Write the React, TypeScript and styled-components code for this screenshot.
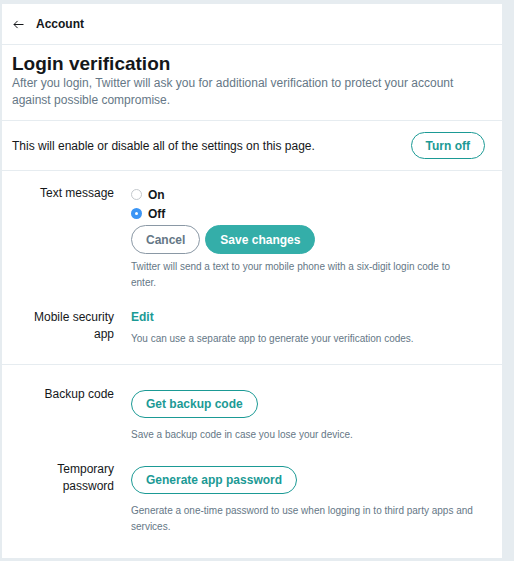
import React, { useState } from 'react'
import styled, { createGlobalStyle } from 'styled-components'

const teal = '#1b9a95'
const tealFill = '#34aea9'
const ink = '#14171a'
const gray = '#657786'
const line = '#e6ecf0'

const Global = createGlobalStyle`
  body {
    margin: 0;
    background: ${line};
    font-family: "Liberation Sans", Arial, Helvetica, sans-serif;
    color: ${ink};
  }
`

const S = {
  Page: styled.div`
    padding: 4px 12px 4px 2px;
  `,
  Panel: styled.div`
    background: #fff;
    width: 500px;
    padding-bottom: 23px;
  `,
  Header: styled.div`
    display: flex;
    align-items: center;
    gap: 12px;
    height: 40px;
    padding-left: 11px;
    border-bottom: 1px solid ${line};
    font-size: 12px;
    font-weight: 700;
  `,
  Back: styled.button`
    display: flex;
    align-items: center;
    padding: 0;
    border: none;
    background: none;
    cursor: pointer;
  `,
  Intro: styled.div`
    padding: 8px 10px 11px;
    border-bottom: 1px solid ${line};
  `,
  Title: styled.h1`
    margin: 0;
    font-size: 19px;
    line-height: 22px;
    font-weight: 700;
  `,
  Lead: styled.p`
    margin: 0;
    font-size: 12px;
    line-height: 17px;
    color: ${gray};
  `,
  Toggle: styled.div`
    display: flex;
    align-items: center;
    justify-content: space-between;
    padding: 11px 17px 11px 10px;
    border-bottom: 1px solid ${line};
    font-size: 12px;
  `,
  Section: styled.div<{ $top: number; $bottom: number; $divider?: boolean }>`
    display: grid;
    grid-template-columns: 112px 1fr;
    column-gap: 17px;
    row-gap: 18px;
    padding: ${p => p.$top}px 27px ${p => p.$bottom}px 0;
    border-bottom: ${p => (p.$divider ? `1px solid ${line}` : 'none')};
  `,
  Label: styled.div`
    text-align: right;
    font-size: 12px;
    line-height: 17px;
  `,
  Field: styled.div`
    display: flex;
    flex-direction: column;
    align-items: flex-start;
  `,
  Radio: styled.label`
    display: flex;
    align-items: center;
    gap: 6px;
    height: 19px;
    font-size: 12px;
    font-weight: 700;
    cursor: pointer;
  `,
  Dot: styled.span<{ $on: boolean }>`
    box-sizing: border-box;
    width: 11px;
    height: 11px;
    border-radius: 50%;
    border: ${p => (p.$on ? 'none' : '1px solid #c4c9cd')};
    background: ${p => (p.$on ? '#3b95f5' : '#fff')};
    display: flex;
    align-items: center;
    justify-content: center;
    &::after {
      content: '';
      width: 3px;
      height: 3px;
      border-radius: 50%;
      background: ${p => (p.$on ? '#fff' : 'transparent')};
    }
  `,
  Actions: styled.div`
    display: flex;
    gap: 5px;
    margin-top: 2px;
  `,
  Button: styled.button<{ $variant: 'outline' | 'fill' | 'muted' }>`
    box-sizing: border-box;
    height: ${p => (p.$variant === 'outline' ? 28 : 29)}px;
    padding: 0 14px;
    border-radius: 100px;
    font-family: inherit;
    font-size: 12px;
    font-weight: 700;
    cursor: pointer;
    border: 1px solid
      ${p => (p.$variant === 'fill' ? tealFill : p.$variant === 'muted' ? '#8a98a5' : teal)};
    background: ${p => (p.$variant === 'fill' ? tealFill : '#fff')};
    color: ${p => (p.$variant === 'fill' ? '#fff' : p.$variant === 'muted' ? gray : teal)};
  `,
  Holder: styled.div<{ $top: number }>`
    padding: ${p => p.$top}px 0 4px;
  `,
  Link: styled.a`
    font-size: 12px;
    line-height: 17px;
    font-weight: 700;
    color: ${teal};
    text-decoration: none;
    cursor: pointer;
  `,
  Help: styled.p`
    margin: 5px 0 0;
    font-size: 10px;
    line-height: 16px;
    color: ${gray};
  `
}

const BackArrow = () => (
  <svg width='11' height='9' viewBox='0 0 11 9' fill='none' stroke={ink} strokeWidth='1'>
    <path d='M10.5 4.5H1M4.6 0.9L1 4.5l3.6 3.6' />
  </svg>
)

export default function App() {
  const [sms, setSms] = useState<'on' | 'off'>('off')

  return (
    <>
      <Global />
      <S.Page>
        <S.Panel>
          <S.Header>
            <S.Back type='button' aria-label='Back'>
              <BackArrow />
            </S.Back>
            Account
          </S.Header>

          <S.Intro>
            <S.Title>Login verification</S.Title>
            <S.Lead>
              After you login, Twitter will ask you for additional verification to protect your account
              against possible compromise.
            </S.Lead>
          </S.Intro>

          <S.Toggle>
            This will enable or disable all of the settings on this page.
            <S.Button $variant='outline' type='button' style={{ height: 27 }}>
              Turn off
            </S.Button>
          </S.Toggle>

          <S.Section $top={14} $bottom={17} $divider>
            <S.Label>Text message</S.Label>
            <S.Field>
              <S.Radio onClick={() => setSms('on')}>
                <S.Dot $on={sms === 'on'} />
                On
              </S.Radio>
              <S.Radio onClick={() => setSms('off')}>
                <S.Dot $on={sms === 'off'} />
                Off
              </S.Radio>
              <S.Actions>
                <S.Button $variant='muted' type='button'>Cancel</S.Button>
                <S.Button $variant='fill' type='button'>Save changes</S.Button>
              </S.Actions>
              <S.Help>Twitter will send a text to your mobile phone with a six-digit login code to enter.</S.Help>
            </S.Field>

            <S.Label>
              Mobile security
              <br />
              app
            </S.Label>
            <S.Field>
              <S.Link>Edit</S.Link>
              <S.Help>You can use a separate app to generate your verification codes.</S.Help>
            </S.Field>
          </S.Section>

          <S.Section $top={21} $bottom={0}>
            <S.Label>Backup code</S.Label>
            <S.Field>
              <S.Holder $top={4}>
                <S.Button $variant='outline' type='button'>Get backup code</S.Button>
              </S.Holder>
              <S.Help>Save a backup code in case you lose your device.</S.Help>
            </S.Field>

            <S.Label>
              Temporary
              <br />
              password
            </S.Label>
            <S.Field>
              <S.Holder $top={5}>
                <S.Button $variant='outline' type='button'>Generate app password</S.Button>
              </S.Holder>
              <S.Help>Generate a one-time password to use when logging in to third party apps and services.</S.Help>
            </S.Field>
          </S.Section>
        </S.Panel>
      </S.Page>
    </>
  )
}
